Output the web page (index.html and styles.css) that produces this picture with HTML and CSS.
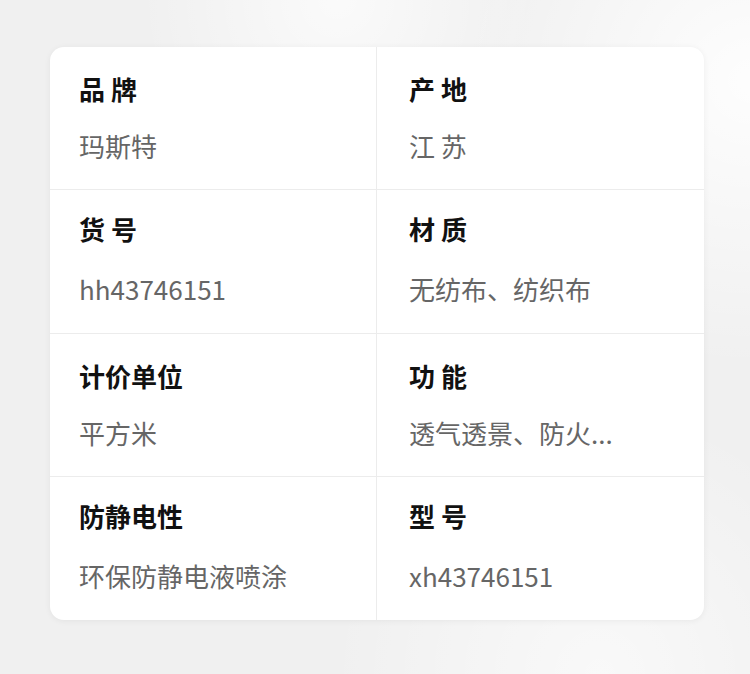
FILE: index.html
```html
<!DOCTYPE html>
<html lang="zh-CN">
<head>
    <meta charset="UTF-8">
    <meta name="viewport" content="width=device-width, initial-scale=1.0">
    <title>商品参数</title>
    <link rel="stylesheet" href="styles.css">
</head>
<body>
    <div class="spec-card">
        <div class="spec-item">
            <div class="spec-label">品 牌</div>
            <div class="spec-value">玛斯特</div>
        </div>
        <div class="spec-item">
            <div class="spec-label">产 地</div>
            <div class="spec-value">江 苏</div>
        </div>
        <div class="spec-item spec-item-tight">
            <div class="spec-label">货 号</div>
            <div class="spec-value">hh43746151</div>
        </div>
        <div class="spec-item spec-item-tight">
            <div class="spec-label">材 质</div>
            <div class="spec-value">无纺布、纺织布</div>
        </div>
        <div class="spec-item">
            <div class="spec-label">计价单位</div>
            <div class="spec-value">平方米</div>
        </div>
        <div class="spec-item">
            <div class="spec-label">功 能</div>
            <div class="spec-value">透气透景、防火...</div>
        </div>
        <div class="spec-item spec-item-tight">
            <div class="spec-label">防静电性</div>
            <div class="spec-value">环保防静电液喷涂</div>
        </div>
        <div class="spec-item spec-item-tight">
            <div class="spec-label">型 号</div>
            <div class="spec-value">xh43746151</div>
        </div>
    </div>
</body>
</html>
```

FILE: styles.css
```css
* {
    box-sizing: border-box;
    margin: 0;
    padding: 0;
}
body {
    font-family: "Noto Sans CJK SC", "Noto Sans", sans-serif;
    background-color: #f0f0f0;
    background-image:
        radial-gradient(circle at 100% 12%, rgba(255, 255, 255, 0.9) 0, rgba(255, 255, 255, 0) 30%),
        radial-gradient(circle at 45% 0%, rgba(255, 255, 255, 0.7) 0, rgba(255, 255, 255, 0) 25%),
        radial-gradient(circle at 80% 100%, rgba(255, 255, 255, 0.6) 0, rgba(255, 255, 255, 0) 30%);
    width: 750px;
    height: 674px;
    padding: 47px 0 0 50px;
}
.spec-card {
    width: 654px;
    height: 573px;
    background-color: #fff;
    border-radius: 14px;
    box-shadow: 0 1px 6px rgba(0, 0, 0, 0.06);
    display: grid;
    grid-template-columns: 1fr 1fr;
    grid-template-rows: repeat(4, 1fr);
    overflow: hidden;
}
.spec-item {
    padding: 24px 0 0 29px;
    border-bottom: 1px solid #ececec;
}
.spec-item:nth-child(odd) {
    border-right: 1px solid #ececec;
}
.spec-item:nth-child(even) {
    padding-left: 32px;
}
.spec-item:nth-last-child(-n+2) {
    border-bottom: none;
}
.spec-label {
    font-size: 26px;
    line-height: 36px;
    font-weight: bold;
    color: #111;
}
.spec-value {
    margin-top: 21px;
    font-size: 26px;
    line-height: 36px;
    color: #666;
}
.spec-item-tight .spec-label {
    margin-top: -3px;
}
.spec-item-tight .spec-value {
    margin-top: 24px;
}
```
